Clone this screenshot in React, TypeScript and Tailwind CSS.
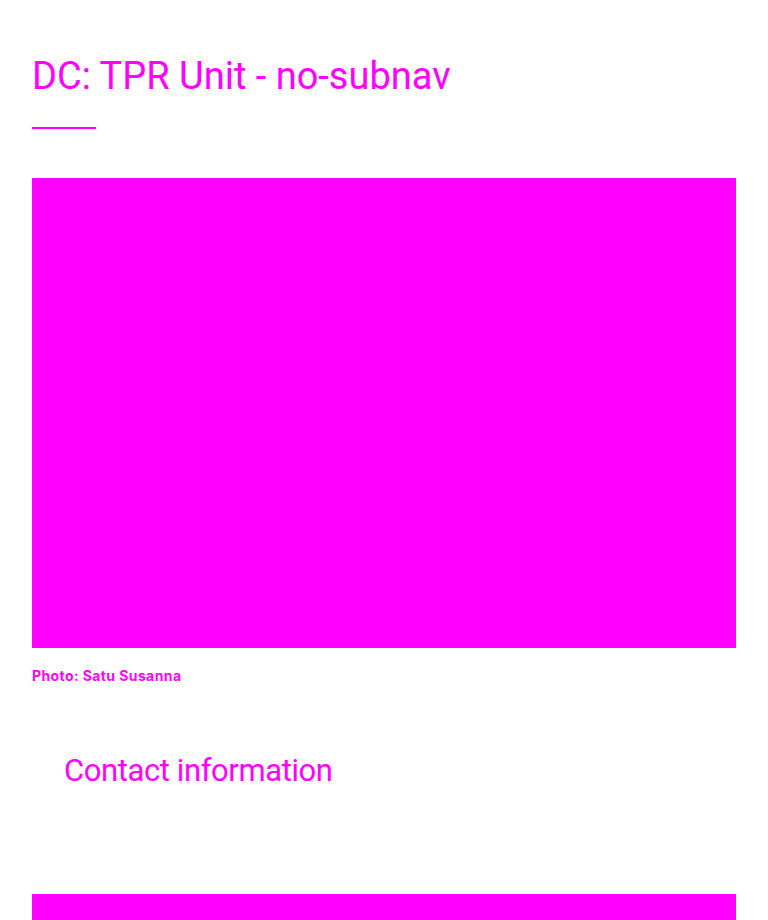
import React from 'react';

const App = () => {
  return (
    <div className="min-h-[920px] bg-white px-8 text-[#ff00ff]" style={{ fontFamily: 'Roboto, "Liberation Sans", sans-serif' }}>
      <header className="pt-[52px]">
        <h1 className="text-[38px] leading-[48px] font-normal tracking-[0px]">DC: TPR Unit - no-subnav</h1>
        <div className="mt-[27px] h-[2px] w-16 bg-[#ff00ff]" />
      </header>

      <figure className="mt-[49px]">
        <div className="h-[470px] w-full bg-[#ff00ff]" />
        <figcaption
          className="mt-[18px] text-[14px] leading-5 font-bold tracking-[0.4px]"
          style={{ fontFamily: 'Inter, "Liberation Sans", sans-serif' }}
        >
          Photo: Satu Susanna
        </figcaption>
      </figure>

      <section className="mt-[65px] px-8">
        <h2 className="text-[31px] leading-10 font-normal tracking-[-0.4px]">Contact information</h2>
      </section>

      <div className="mt-[103px] h-[26px] w-full bg-[#ff00ff]" />
    </div>
  );
};

export default App;
